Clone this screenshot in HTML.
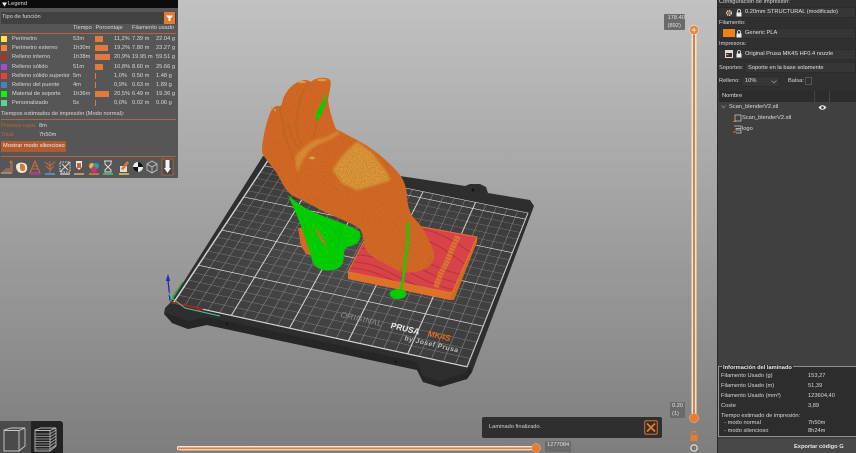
<!DOCTYPE html>
<html><head><meta charset="utf-8">
<style>
html,body{margin:0;padding:0;width:856px;height:453px;overflow:hidden;background:#999}
body{font-family:"Liberation Sans",sans-serif;position:relative}
#view{position:absolute;left:0;top:0;width:717px;height:453px;background:linear-gradient(180deg,#c2c2c2 0%,#b0b0b0 25%,#999 60%,#7e7e7e 100%)}
.t{position:absolute;white-space:nowrap;font-size:5.7px;line-height:7px;color:#d8d8d8}
.b{position:absolute;background:#e37a3d;height:6px}
.s{position:absolute;left:1px;width:6px;height:6px}
#legend{position:absolute;left:0;top:0;width:178px;height:178px;background:#565656}
.ln{position:absolute;left:1px;width:175px;height:1px;background:#b4663a}
#right{position:absolute;left:717px;top:0;width:139px;height:453px;background:#404040;border-left:1px solid #2a2a2a;box-sizing:border-box}
.row{position:absolute;background:#363636;border:1px solid #2c2c2c;box-sizing:border-box}
#grid{position:absolute;left:0;top:0;width:250px;height:210px;transform-origin:0 0;transform:matrix3d(1.13032,.22012,0,-.0000978,.62657,-.57695,0,.00065,0,0,1,0,173,303,0,1)}
svg{position:absolute;left:0;top:0;overflow:visible}
</style></head>
<body>
<div id="view"></div>

<svg width="717" height="453" viewBox="0 0 717 453">
<polygon fill="#2e2e2e" points="263,156 420,179 465,186 470,184 480,184 486,187 488,193 530,200 534,206 472,372 467,379 440,387 423,382 417,370 207,325 188,329 172,323 164,314 165,308 171,302"/>
<polygon fill="#262626" points="164,312 172,315 188,321 207,317 417,362 423,376 440,381 465,373 470,366 472,372 467,379 440,387 423,382 417,370 207,325 188,329 172,323"/>
<circle cx="473" cy="190" r="1.3" fill="#111"/><circle cx="227" cy="324" r="1.2" fill="#151515"/><circle cx="396" cy="362" r="1.2" fill="#151515"/>
</svg>

<div id="grid">
<svg width="250" height="210" viewBox="0 0 250 210">
<defs>
<pattern id="mi" width="10" height="10" patternUnits="userSpaceOnUse"><path d="M0 0H10M0 0V10" stroke="#858585" stroke-width="1"/></pattern>
<pattern id="ma" width="50" height="50" patternUnits="userSpaceOnUse"><path d="M0 0H50M0 0V50" stroke="#d6d6d6" stroke-width="1.8"/></pattern>
<radialGradient id="sh" cx=".5" cy=".45" r=".7"><stop offset="0" stop-color="#4c4c4c"/><stop offset="1" stop-color="#3a3a3a"/></radialGradient>
</defs>
<rect width="250" height="210" fill="url(#sh)"/>
<rect width="250" height="210" fill="url(#mi)"/>
<rect width="250" height="210" fill="url(#ma)"/>
<path d="M0 0H250V210H0Z" fill="none" stroke="#d6d6d6" stroke-width=".9"/>
</svg>
</div>

<svg width="717" height="453" viewBox="0 0 717 453">
<defs>
<filter id="noise" x="0" y="0" width="1" height="1" color-interpolation-filters="sRGB">
<feTurbulence type="fractalNoise" baseFrequency="1.1" numOctaves="2" seed="4" result="n"/>
<feColorMatrix in="n" type="matrix" values="0 0 0 0 .70  0 0 0 0 .33  0 0 0 0 .10  1.4 0 0 0 -.5" result="d"/>
<feComposite in="d" in2="SourceAlpha" operator="in" result="dd"/>
<feMerge><feMergeNode in="SourceGraphic"/><feMergeNode in="dd"/></feMerge>
</filter>
<filter id="spk" x="-.05" y="-.05" width="1.1" height="1.1" color-interpolation-filters="sRGB">
<feGaussianBlur in="SourceGraphic" stdDeviation="1.2" result="s"/>
<feTurbulence type="fractalNoise" baseFrequency="1.2" numOctaves="1" seed="9" result="n"/>
<feColorMatrix in="n" type="matrix" values="0 0 0 0 .80  0 0 0 0 .40  0 0 0 0 .15  3 0 0 0 -1.2" result="d"/>
<feComposite in="d" in2="s" operator="in" result="dd"/>
<feMerge><feMergeNode in="s"/><feMergeNode in="dd"/></feMerge>
</filter>
<clipPath id="redc"><polygon points="364,241 348,272 452,293 477,237 423,227"/></clipPath>
<filter id="bl" x="-.2" y="-.2" width="1.4" height="1.4" color-interpolation-filters="sRGB"><feGaussianBlur stdDeviation=".7"/></filter>
</defs>

<!-- bed text -->
<g font-family="Liberation Sans" font-weight="bold">
<text transform="matrix(.975,.225,-.32,.95,340,317)" font-size="8.2" letter-spacing=".4" fill="#8a8a8a" font-weight="normal">ORIGINAL</text>
<text transform="matrix(.975,.225,-.32,.95,390,328)" font-size="8.4" fill="#e8e8e8">PRUSA</text>
<text transform="matrix(.975,.225,-.32,.95,427,336)" font-size="8.4" fill="#e06a1e">MK4S</text>
<text transform="matrix(.975,.225,-.32,.95,404,340)" font-size="6.8" letter-spacing=".5" fill="#bdbdbd">by Josef Prusa</text>
</g>

<!-- axes -->
<path d="M170 301 168 280" stroke="#1a2fb8" stroke-width="1.3" fill="none"/><polygon points="168,274 165.8,281 170.2,281" fill="#1a2fb8"/>
<path d="M170 301 183 282" stroke="#20a040" stroke-width="1.2" fill="none"/>
<path d="M170 302 201 309" stroke="#b02020" stroke-width="1.6" fill="none"/><polygon points="204,309 197,306.5 197.5,311" fill="#b02020"/>
<path d="M168 292 172 298 185 308 220 316" stroke="#55c592" stroke-width="1" fill="none"/>

<!-- base block -->
<polygon fill="#cf6a22" points="348,272 348,279 450,300 454,300 477,242 477,237 452,293"/>
<polygon fill="#dc7128" points="348,279 348,272 452,293 450,300"/>
<polygon fill="#d8434a" points="364,241 348,272 452,293 477,237 423,227"/>
<g clip-path="url(#redc)" fill="none" stroke="#b8343c" stroke-width="1.1">
<path d="M352 262C385 262 400 285 440 292M355 255C395 255 415 283 455 290M360 248C400 250 425 278 460 283M365 242C405 245 435 272 465 275M400 232C440 240 460 262 470 268M420 228C450 235 465 250 475 255M350 268C375 268 395 285 425 290"/>
</g>
<path d="M436 287 441 273 447 262 452 249 458 236" stroke="#d9762c" stroke-width="5.5" fill="none" stroke-dasharray="2.6 .7"/>
<polygon fill="none" stroke="#e2762a" stroke-width="1" points="364,241 348,272 452,293 477,237 423,227"/>

<!-- stump behind support -->
<path fill="#d26a26" d="M298 228 301 246 306 254 318 258 325 250 320 225Z"/>

<!-- hand -->
<g filter="url(#noise)">
<path fill="#d66c26" d="M262 152C262 140 266 124 269 116 271 109 275 105 279 106 281 107 282 104 283 99 287 89 295 81 305 80 309 80 311 83 312 81 316 78 326 76 330 80 332 84 329 92 328 100 329 108 332 120 336 129L357 140C372 148 388 160 400 175 405 182 407 190 407 198 408 207 410 214 414 218 422 226 429 238 433 250 436 258 433 264 426 268 418 273 405 275 393 268 382 262 372 258 366 250 363 243 364 235 360 229 350 221 330 216 317 208 305 201 293 197 288 192 283 186 280 178 276 172 272 166 264 158 262 152Z"/>
</g>
<g fill="none" stroke="#b45a1e" stroke-width="1" opacity=".65" filter="url(#bl)">
<path d="M280 108C282 120 284 132 288 145 291 153 295 163 298 170"/>
<path d="M308 84C300 95 297 112 296 125 296 131 298 138 302 145"/>
<path d="M316 122C316 130 314 136 312 140"/>
<path d="M288 122C290 133 294 143 300 149"/>
</g>
<!-- speckled zones -->
<g filter="url(#spk)">
<polygon fill="#d8a63e" points="333,170 341,158 348,150 357,142 372,153 387,173 390,180 375,185 357,190 342,183"/>
<path fill="#d69a3a" d="M296 156C303 148 312 140 320 139 332 137 336 130 340 132 333 140 318 143 312 148 306 154 300 162 298 172 296 168 295 160 296 156Z"/>
</g>
<g fill="#d8a040"><circle cx="272" cy="108" r="1.4"/><circle cx="275" cy="110" r="1.1"/><ellipse cx="302" cy="82" rx="4" ry="1.2"/><ellipse cx="322" cy="80" rx="5" ry="1.2"/><ellipse cx="312" cy="158" rx="3" ry="1.5"/></g>

<!-- supports -->
<path fill="#00cc00" d="M288 195C296 203 308 210 318 214 330 219 348 224 360 232 361 238 360 242 354 245 350 247 346 246 344 250 344 256 344 262 341 266 336 271 326 272 318 268 313 265 312 261 311 256 308 246 305 237 302 229 298 217 292 205 288 195Z"/>
<path fill="#d26a26" d="M315 228 322 241 326 246 321 236Z" stroke="#d26a26" stroke-width="1"/>
<path fill="none" stroke="#00a800" stroke-width=".6" opacity=".5" d="M300 215 310 240M312 222 322 225 336 245M326 222 340 238M340 228 345 245M313 260C322 265 335 265 343 258"/>
<polygon fill="#00d000" points="327,93 325,105 321,115 316,122 316,114 321,104"/>
<path fill="none" stroke="#00d800" stroke-width="2.3" d="M408 222 408 240 405 262 403 280 401 291"/>
<ellipse cx="398" cy="294" rx="8.5" ry="5" fill="#00cc00"/>

<!-- vertical slider -->
<rect x="691.5" y="30" width="5" height="388" fill="#e8e8e8"/>
<rect x="693" y="30" width="2" height="388" fill="#ee7a2c"/>
<circle cx="694" cy="30" r="4.4" fill="#ee7a2c" stroke="#e9d9c8" stroke-width=".6"/>
<path d="M691.5 30H696.5M694 27.5V32.5" stroke="#fff" stroke-width=".9"/>
<circle cx="694" cy="418" r="4.6" fill="#ee7a2c" stroke="#d9c8b8" stroke-width=".5"/>
<g fill="none" stroke="#ee7a2c" stroke-width="1.2"><path d="M691.5 434.5V433C691.5 431 696 431 696 433"/></g>
<rect x="690.5" y="435" width="7" height="6" rx=".5" fill="#ee7a2c"/>
<circle cx="694" cy="448" r="3.2" fill="#777" stroke="#e8e0d8" stroke-width="1.2"/>
<!-- horizontal slider -->
<rect x="177" y="446" width="359" height="4.4" rx="1.5" fill="#e8e8e8"/>
<rect x="178" y="447.4" width="358" height="1.8" fill="#ee7a2c"/>
<circle cx="536" cy="448" r="4.4" fill="#ee7a2c" stroke="#d9c8b8" stroke-width=".5"/>
</svg>

<div style="position:absolute;left:664px;top:14px;width:21px;height:16px;background:#6a6a6a;border-radius:1px"></div>
<div class="t" style="left:666px;top:15px;color:#e0e0e0;line-height:7.5px">&nbsp;178.40<br>&nbsp;(892)</div>
<div style="position:absolute;left:670px;top:402px;width:15px;height:16px;background:#6a6a6a;border-radius:1px"></div>
<div class="t" style="left:672px;top:403px;color:#e0e0e0;line-height:7.5px">0.20<br>(1)</div>
<div style="position:absolute;left:545px;top:441px;width:26px;height:11px;background:#6a6a6a;border-radius:1px"></div>
<div class="t" style="left:547px;top:442px;color:#e0e0e0">1277084</div>

<!-- notification -->
<div style="position:absolute;left:482px;top:417px;width:180px;height:21px;background:#2f2f2f;border-radius:2px"></div>
<div class="t" style="left:489px;top:424px;color:#d0d0d0">Laminado finalizado.</div>
<svg style="left:644px;top:420px" width="14" height="15" viewBox="0 0 14 15"><rect x=".7" y=".7" width="12.6" height="13.6" rx="1.5" fill="none" stroke="#d9702a" stroke-width="1"/><path d="M3 3.5 11 11.5M11 3.5 3 11.5" stroke="#ee7a2c" stroke-width="1.7"/></svg>

<!-- bottom-left view buttons -->
<div style="position:absolute;left:0;top:421px;width:31px;height:32px;background:#4a4a4a"></div>
<div style="position:absolute;left:31px;top:421px;width:32px;height:32px;background:#232323;border-radius:0 3px 0 0"></div>
<svg style="left:0;top:421px" width="64" height="32" viewBox="0 0 64 32">
<g fill="none" stroke="#c8c8c8" stroke-width=".9"><path d="M4 9 11 7 12 7H25L19 9.5H4ZM4 9.5V30H19V9.5M25 7.5V25L19 30"/></g>
<g fill="none" stroke="#b8b8b8" stroke-width=".9"><path d="M35 9 41 7H56L50 9.5H35ZM56 7.5V25L50 30"/><path d="M35 10V30H50V10"/></g>
<path d="M35 13H50M35 15.5H50M35 18H50M35 20.5H50M35 23H50M35 25.5H50M35 28H50M50 13 56 9M50 16 56 12M50 19 56 15M50 22 56 18M50 25 56 21M50 28 56 24" stroke="#a8a8a8" stroke-width=".8" fill="none"/>
</svg>

<!-- legend panel -->
<div id="legend">
<div style="position:absolute;left:0;top:0;width:178px;height:8px;background:#0c0c0c"></div>
<svg style="left:2px;top:1.5px" width="5" height="5"><polygon points="0,.5 5,.5 2.5,4.5" fill="#eee"/></svg>
<div class="t" style="left:8px;top:1px;color:#ddd">Legend</div>
<div style="position:absolute;left:1px;top:12px;width:175px;height:12px;background:#414141"></div>
<div class="t" style="left:2px;top:14px">Tipo de función</div>
<div style="position:absolute;left:164px;top:12px;width:11px;height:12px;background:#e8792c"></div>
<svg style="left:166px;top:14.5px" width="7" height="7"><polygon points="0,.5 7,.5 4.5,3.5 4.5,6 2.5,6 2.5,3.5" fill="#fff"/></svg>
<div class="t" style="left:73px;top:25px">Tiempo</div><div class="t" style="left:95.5px;top:25px">Porcentaje</div><div class="t" style="left:132px;top:25px">Filamento usado</div>
<div class="ln" style="top:33px"></div>

<div class="s" style="top:36px;background:#ffe54d"></div><div class="t" style="left:12px;top:36px">Perímetro</div><div class="t" style="left:73px;top:36px">53m</div><div class="b" style="left:95px;top:36px;width:8px"></div><div class="t" style="left:114px;top:36px">11,2%</div><div class="t" style="left:132px;top:36px">7.39 m</div><div class="t" style="left:156px;top:36px">22.04 g</div>
<div class="s" style="top:45px;background:#ff7d38"></div><div class="t" style="left:12px;top:45px">Perímetro externo</div><div class="t" style="left:73px;top:45px">1h30m</div><div class="b" style="left:95px;top:45px;width:13px"></div><div class="t" style="left:114px;top:45px">19,2%</div><div class="t" style="left:132px;top:45px">7.80 m</div><div class="t" style="left:156px;top:45px">23.27 g</div>
<div class="s" style="top:54px;background:#b03029"></div><div class="t" style="left:12px;top:54px">Relleno interno</div><div class="t" style="left:73px;top:54px">1h38m</div><div class="b" style="left:95px;top:54px;width:15px"></div><div class="t" style="left:114px;top:54px">20,9%</div><div class="t" style="left:132px;top:54px">19.95 m</div><div class="t" style="left:156px;top:54px">59.51 g</div>
<div class="s" style="top:63.5px;background:#9654cc"></div><div class="t" style="left:12px;top:63.5px">Relleno sólido</div><div class="t" style="left:73px;top:63.5px">51m</div><div class="b" style="left:95px;top:63.5px;width:8px"></div><div class="t" style="left:114px;top:63.5px">10,8%</div><div class="t" style="left:132px;top:63.5px">8.60 m</div><div class="t" style="left:156px;top:63.5px">25.66 g</div>
<div class="s" style="top:72.5px;background:#f03c3c"></div><div class="t" style="left:12px;top:72.5px">Relleno sólido superior</div><div class="t" style="left:73px;top:72.5px">5m</div><div class="b" style="left:95px;top:72.5px;width:1px"></div><div class="t" style="left:114px;top:72.5px">1,0%</div><div class="t" style="left:132px;top:72.5px">0.50 m</div><div class="t" style="left:156px;top:72.5px">1.48 g</div>
<div class="s" style="top:81.5px;background:#4d80ba"></div><div class="t" style="left:12px;top:81.5px">Relleno del puente</div><div class="t" style="left:73px;top:81.5px">4m</div><div class="b" style="left:95px;top:81.5px;width:1px"></div><div class="t" style="left:114px;top:81.5px">0,9%</div><div class="t" style="left:132px;top:81.5px">0.63 m</div><div class="t" style="left:156px;top:81.5px">1.89 g</div>
<div class="s" style="top:90.5px;background:#00ff00"></div><div class="t" style="left:12px;top:90.5px">Material de soporte</div><div class="t" style="left:73px;top:90.5px">1h36m</div><div class="b" style="left:95px;top:90.5px;width:14px"></div><div class="t" style="left:114px;top:90.5px">20,5%</div><div class="t" style="left:132px;top:90.5px">6.49 m</div><div class="t" style="left:156px;top:90.5px">19.36 g</div>
<div class="s" style="top:99.5px;background:#5ed194"></div><div class="t" style="left:12px;top:99.5px">Personalizado</div><div class="t" style="left:73px;top:99.5px">5s</div><div class="b" style="left:95px;top:99.5px;width:1px"></div><div class="t" style="left:114px;top:99.5px">0,0%</div><div class="t" style="left:132px;top:99.5px">0.02 m</div><div class="t" style="left:156px;top:99.5px">0.06 g</div>

<div class="t" style="left:1px;top:111px">Tiempos estimados de impresión (Modo normal):</div>
<div class="ln" style="top:119px"></div>
<div class="t" style="left:1px;top:123px;color:#b8663a">Primera capa:</div><div class="t" style="left:39px;top:123px">8m</div>
<div class="t" style="left:1px;top:132px;color:#b8663a">Total:</div><div class="t" style="left:39px;top:132px">7h50m</div>
<div style="position:absolute;left:1px;top:141px;width:65px;height:11px;background:#b35a2c"></div>
<div class="t" style="left:3px;top:143px;color:#eee">Mostrar modo silencioso</div>
<div class="ln" style="top:156px"></div>

<svg style="left:0;top:158px" width="178" height="20" viewBox="0 0 178 20">
<g>
<path d="M2 14 6 10 10 10 10 5 13 5 13 14Z" fill="#8a6a55"/><path d="M9 5 11 2 13 5Z" fill="#d9702a"/><rect x="1" y="14" width="11" height="2" fill="#9a8a7a"/>
<path d="M16 8C16 4 26 3 27 8 28 13 25 15 22 15 18 15 16 12 16 8Z" fill="#e8e8e8"/><path d="M20 6C23 5 26 7 25 12 23 14 20 13 20 10Z" fill="#e2752a"/>
<path d="M35 3 40 15H30Z" fill="none" stroke="#c86a3a" stroke-width="1.1"/><path d="M32.5 8H37.5M31.5 11H38.5" stroke="#c86a3a"/><rect x="30" y="15" width="10" height="2" fill="#9a3ab0"/>
<path d="M45 4 50 8 55 4M46 8 50 12 54 8M50 3V15" stroke="#c86a3a" fill="none"/><rect x="45" y="15" width="10" height="2" fill="#4a90b8"/>
<rect x="60" y="4" width="10" height="10" fill="none" stroke="#d8d8d8" stroke-dasharray="1.5 1"/><path d="M60 14 70 4M62 6 68 12" stroke="#d8d8d8"/><rect x="60" y="15" width="10" height="2" fill="#aaa"/>
<path d="M76 3H82V9L79 12 76 9Z" fill="#e8e8e8"/><rect x="77" y="5" width="4" height="5" fill="#d9602a"/><rect x="74" y="15" width="10" height="2" fill="#b89a60"/>
<circle cx="92" cy="8" r="3" fill="#e0c020"/><circle cx="96" cy="8" r="3" fill="#20a0c0"/><circle cx="94" cy="11.5" r="3" fill="#d03080"/><rect x="89" y="15" width="10" height="2" fill="#c8703a"/>
<path d="M104 3H112M105 3V6L108 9 105 12V14H111V12L108 9 111 6V3" fill="none" stroke="#d8d8d8"/><rect x="103" y="15" width="10" height="2" fill="#40b070"/>
<rect x="120" y="8" width="7" height="6" fill="#ddd"/><path d="M121 11 127 3 129 5 123 12Z" fill="#e2752a"/><rect x="119" y="15" width="10" height="2" fill="#c8b040"/>
<circle cx="138" cy="9" r="5" fill="#eee"/><path d="M138 4A5 5 0 0 1 143 9H138V14A5 5 0 0 1 133 9H138Z" fill="#111"/>
<path d="M152 3 157 6V12L152 15 147 12V6ZM147 6 152 9 157 6M152 9V15" fill="none" stroke="#c8c8c8" stroke-width=".8"/>
<rect x="162" y="1" width="11" height="16" fill="#4a4a4a" stroke="#b4663a" stroke-width=".8"/><path d="M165.5 2H169.5V10H171L167.5 15 164 10H165.5Z" fill="#f4f4f4"/>
</g>
</svg>
</div>

<!-- right panel -->
<div id="right"></div>
<div style="position:absolute;left:718px;top:0;width:138px;height:91px;background:#303030"></div>
<div class="t" style="left:719px;top:-1px">Configuración de impresión:</div>
<div class="row" style="left:718px;top:7px;width:138px;height:11px"></div>
<svg style="left:725px;top:9px" width="8" height="8"><circle cx="4" cy="4" r="2.3" fill="none" stroke="#ddd" stroke-width="1.4" stroke-dasharray="1.5 .6"/><circle cx="4" cy="4" r="1" fill="#e2752a"/></svg>
<div class="t" style="left:745px;top:9px;color:#e0e0e0">0.20mm STRUCTURAL (modificado)</div>
<div class="t" style="left:719px;top:20px">Filamento:</div>
<div class="row" style="left:718px;top:28px;width:138px;height:11px"></div>
<div style="position:absolute;left:723px;top:29px;width:12px;height:8px;background:#f08018"></div>
<div class="t" style="left:745px;top:30px;color:#e0e0e0">Generic PLA</div>
<div class="t" style="left:719px;top:41px">Impresora:</div>
<div class="row" style="left:718px;top:49px;width:138px;height:11px"></div>
<svg style="left:725px;top:50px" width="8" height="8"><rect x=".5" y=".5" width="7" height="7" fill="none" stroke="#ddd"/><rect x="1" y="1" width="6" height="2" fill="#ddd"/><rect x="1" y="4" width="2.5" height="1.2" fill="#e2752a"/></svg>
<div class="t" style="left:745px;top:51px;color:#e0e0e0">Original Prusa MK4S HF0.4 nozzle</div>
<svg style="left:735px;top:9px" width="8" height="50" viewBox="0 0 8 50"><g fill="#eee"><rect x="1.5" y="3.5" width="5" height="4"/><rect x="1.5" y="24.5" width="5" height="4"/><rect x="1.5" y="44.5" width="5" height="4"/></g><g fill="none" stroke="#eee" stroke-width=".8"><path d="M2.5 3.5V2A1.5 1.5 0 0 1 5.5 2V3.5M2.5 24.5V23A1.5 1.5 0 0 1 5.5 23V24.5M2.5 44.5V43A1.5 1.5 0 0 1 5.5 43V44.5"/></g></svg>
<div class="t" style="left:719px;top:65px">Soportes:</div>
<div class="row" style="left:744px;top:62px;width:112px;height:11px"></div>
<div class="t" style="left:748px;top:65px;color:#e0e0e0">Soporte en la base solamente</div>
<div class="t" style="left:719px;top:78px">Relleno:</div>
<div class="row" style="left:741px;top:76px;width:39px;height:11px"></div>
<div class="t" style="left:745px;top:78px;color:#e0e0e0">10%</div>
<svg style="left:771px;top:80px" width="6" height="4"><path d="M.5 .5 3 3 5.5 .5" fill="none" stroke="#999" stroke-width=".7"/></svg>
<div class="t" style="left:788px;top:78px">Balsa:</div>
<div style="position:absolute;left:805px;top:77px;width:7px;height:8px;border:1px solid #555;box-sizing:border-box"></div>

<div style="position:absolute;left:719px;top:91px;width:137px;height:11px;background:#2c2c2c"></div>
<div style="position:absolute;left:814px;top:91px;width:1px;height:11px;background:#444"></div>
<div style="position:absolute;left:829px;top:91px;width:1px;height:11px;background:#444"></div>
<div class="t" style="left:722px;top:93px;color:#ddd">Nombre</div>
<svg style="left:721px;top:105px" width="5" height="4"><path d="M.5 .5 2.5 2.8 4.5 .5" fill="none" stroke="#888" stroke-width=".8"/></svg>
<div class="t" style="left:729px;top:104px;color:#ddd">Scan_blenderV2.stl</div>
<svg style="left:818px;top:104px" width="9" height="7"><path d="M.5 3.5C3 .5 6 .5 8.5 3.5 6 6.5 3 6.5 .5 3.5Z" fill="#eee"/><circle cx="4.5" cy="3.5" r="1.3" fill="#333"/></svg>
<svg style="left:733px;top:114px" width="9" height="9"><path d="M2 1H8V7H2Z" fill="none" stroke="#ccc" stroke-width=".7"/><path d="M0 7.5H3.5" stroke="#e2752a"/></svg>
<div class="t" style="left:742px;top:115px;color:#ddd">Scan_blenderV2.stl</div>
<svg style="left:733px;top:125px" width="9" height="9"><path d="M1 1H8V3.5H3V5H8V8H3" fill="none" stroke="#ccc" stroke-width=".7"/><path d="M0 7H3" stroke="#e2752a"/></svg>
<div class="t" style="left:742px;top:126px;color:#ddd">logo</div>

<!-- info -->
<div style="position:absolute;left:718px;top:366px;width:138px;height:71px;background:#2d2d2d;border:1px solid #909090;border-right:0;box-sizing:border-box"></div>
<div class="t" style="left:722px;top:365px;background:#2d2d2d;padding:0 1px;font-weight:bold;color:#e4e4e4">Información del laminado</div>
<div class="t" style="left:721px;top:373px">Filamento Usado (g)</div><div class="t" style="left:808px;top:373px">153,27</div>
<div class="t" style="left:721px;top:383px">Filamento Usado (m)</div><div class="t" style="left:808px;top:383px">51,39</div>
<div class="t" style="left:721px;top:393px">Filamento Usado (mm³)</div><div class="t" style="left:808px;top:393px">123604,40</div>
<div class="t" style="left:721px;top:403px">Coste</div><div class="t" style="left:808px;top:403px">3,89</div>
<div class="t" style="left:721px;top:413px">Tiempo estimado de impresión:</div>
<div class="t" style="left:721px;top:420px">&nbsp;&nbsp;- modo normal</div><div class="t" style="left:808px;top:420px">7h50m</div>
<div class="t" style="left:721px;top:428px">&nbsp;&nbsp;- modo silencioso</div><div class="t" style="left:808px;top:428px">8h24m</div>
<div style="position:absolute;left:718px;top:439px;width:138px;height:14px;background:#484848"></div>
<div class="t" style="left:794px;top:444px;font-weight:bold;color:#e4e4e4">Exportar código G</div>
</body></html>
